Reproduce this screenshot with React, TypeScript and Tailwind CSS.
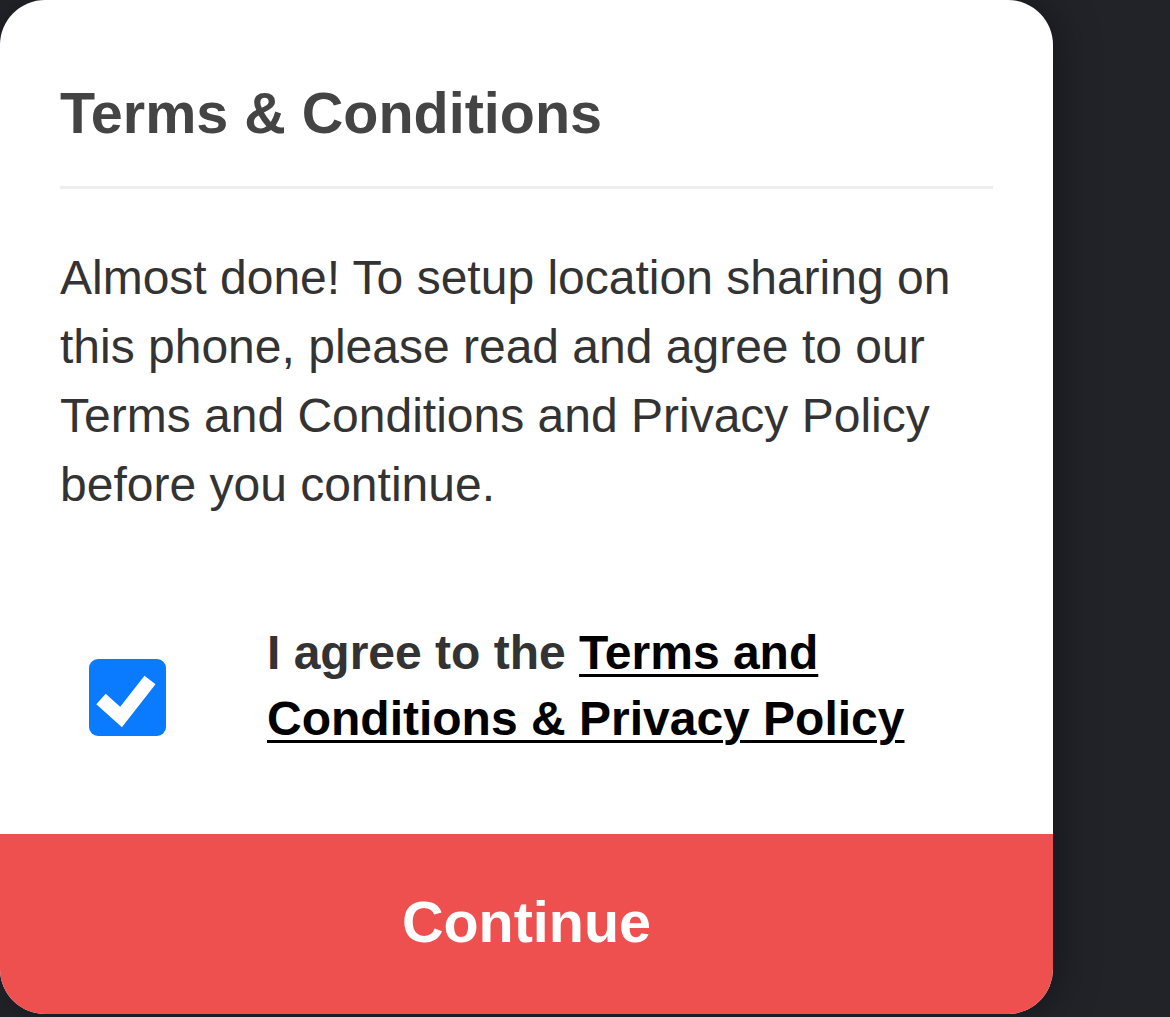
import React from "react";

export default function App() {
  return (
    <div
      className="w-full h-[1017px] bg-[#222329] overflow-hidden"
      style={{ fontFamily: '"Liberation Sans", Arial, sans-serif' }}
    >
      <div className="w-[1053px] h-[1014px] bg-white rounded-[45px] overflow-hidden flex flex-col shadow-[6px_0_40px_rgba(0,0,0,0.35)]">
        <div className="px-[60px] pt-[79px]">
          <h1 className="text-[57.5px] leading-[68px] font-bold text-[#444444]">
            Terms &amp; Conditions
          </h1>
          <div className="mt-[39px] h-[3px] bg-[#eeeeee]" />
          <p className="mt-[54px] text-[48px] leading-[69px] text-[#333333]">
            Almost done! To setup location sharing on this phone, please read and
            agree to our Terms and Conditions and Privacy Policy before you
            continue.
          </p>
          <div className="mt-[101px] flex items-start">
            <div className="w-[207px] shrink-0 pl-[29px] pt-[39px]">
              <div className="w-[77px] h-[77px] rounded-[9px] bg-[#0a7aff] flex items-center justify-center">
                <svg width="77" height="77" viewBox="0 0 77 77">
                  <path
                    d="M12 40 L32 58 L61 21"
                    fill="none"
                    stroke="white"
                    strokeWidth="14"
                  />
                </svg>
              </div>
            </div>
            <p className="text-[48px] leading-[66px] font-bold text-[#333333]">
              I agree to the{" "}
              <span className="text-black underline decoration-[3px] underline-offset-[5px]">
                Terms and Conditions &amp; Privacy Policy
              </span>
            </p>
          </div>
        </div>
        <div className="mt-auto h-[180px] bg-[#ee5050] flex items-center justify-center pb-[3px]">
          <span className="text-[57.5px] font-bold text-white">Continue</span>
        </div>
      </div>
    </div>
  );
}
